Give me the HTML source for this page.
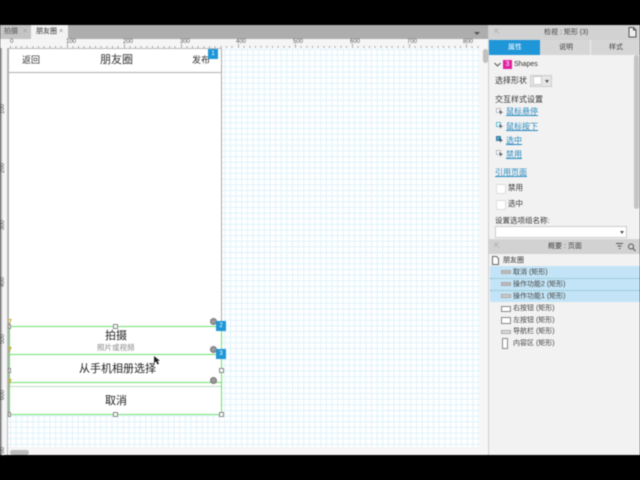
<!DOCTYPE html>
<html><head><meta charset="utf-8"><style>
html,body{margin:0;padding:0;width:640px;height:480px;overflow:hidden;background:#000}
body{font-family:"Liberation Sans","Noto Sans CJK SC",sans-serif;color:#333}
#w{position:absolute;left:0;top:0;width:640px;height:480px;overflow:hidden;filter:blur(.45px)}
#w div,#w a{position:absolute;white-space:nowrap}
.t{line-height:1}
.l{color:#2a8bc0;text-decoration:underline;font-size:8px;line-height:1}
.h{width:3px;height:3px;background:#fff;border:1px solid #888}
.c{width:5px;height:5px;border-radius:50%;background:#999;border:1px solid #777}
.b{width:10px;height:10px;background:#1e96d8;color:#fff;font-size:6px;line-height:10px;text-align:center}
.g{background:#6fe06f;height:1px;left:9px;width:212px}
.y{color:#c9a010;font-size:7px;font-weight:bold;line-height:1;left:8px}
.s{background:#c3e4f6}
.n{font-size:7px;line-height:1;color:#444;left:513px}
.ic{border:1px solid #888;background:#fff;box-sizing:border-box}
</style></head><body><div id="w">
<div style="left:0;top:25px;width:640px;height:430px;background:#f2f2f2"></div>
<!-- tabs -->
<div style="left:0;top:25px;width:489px;height:14px;background:#adadad"></div>
<div style="left:0;top:25px;width:31px;height:14px;background:#c4c4c4"></div>
<div class="t" style="left:4px;top:28px;font-size:7px;color:#555">拍摄</div>
<div class="t" style="left:23px;top:28px;font-size:7px;color:#999">×</div>
<div style="left:31px;top:25px;width:37px;height:14px;background:#f2f2f2"></div>
<div class="t" style="left:36px;top:28px;font-size:7px;color:#333">朋友圈</div>
<div class="t" style="left:59px;top:28px;font-size:7px;color:#888">×</div>
<div style="left:474px;top:32px;width:0;height:0;border:3px solid transparent;border-top:3px solid #555"></div>
<!-- ruler -->
<div style="left:0;top:39px;width:480px;height:9px;background:#f5f5f5"></div>
<svg style="position:absolute;left:0;top:39px" width="480" height="9"><g stroke="#aaa" stroke-width="1">
<path d="M10.500 7v2M16 7v2M21.500 7v2M27 7v2M33 7v2M38.500 7v2M44 7v2M50 7v2M55.500 7v2M61 7v2M67.500 5v4M73 7v2M78.500 7v2M84 7v2M90 7v2M95.500 7v2M101 7v2M107 7v2M112.500 7v2M118 7v2M124.500 5v4M130 7v2M135.500 7v2M141 7v2M147 7v2M152.500 7v2M158 7v2M164 7v2M169.500 7v2M175 7v2M181.500 5v4M187 7v2M192.500 7v2M198 7v2M204 7v2M209.500 7v2M215 7v2M221 7v2M226.500 7v2M232 7v2M238.500 5v4M244 7v2M250 7v2M255.500 7v2M261 7v2M267 7v2M272.500 7v2M278 7v2M284 7v2M289.500 7v2M295.500 5v4M301 7v2M307 7v2M312.500 7v2M318 7v2M324 7v2M329.500 7v2M335 7v2M341 7v2M346.500 7v2M352.500 5v4M358 7v2M364 7v2M369.500 7v2M375 7v2M381 7v2M386.500 7v2M392 7v2M398 7v2M403.500 7v2M409.500 5v4M415 7v2M421 7v2M426.500 7v2M432 7v2M438 7v2M443.500 7v2M449 7v2M455 7v2M460.500 7v2M466.500 5v4M472 7v2M478 7v2"/></g></svg>
<div class="t" style="left:10px;top:39px;font-size:6px;color:#555">0</div>
<div class="t" style="left:66px;top:39px;font-size:6px;color:#555">100</div>
<div class="t" style="left:123px;top:39px;font-size:6px;color:#555">200</div>
<div class="t" style="left:180px;top:39px;font-size:6px;color:#555">300</div>
<div class="t" style="left:236px;top:39px;font-size:6px;color:#555">400</div>
<div class="t" style="left:293px;top:39px;font-size:6px;color:#555">500</div>
<div class="t" style="left:350px;top:39px;font-size:6px;color:#555">600</div>
<div class="t" style="left:407px;top:39px;font-size:6px;color:#555">700</div>
<div class="t" style="left:463px;top:39px;font-size:6px;color:#555">800</div>
<!-- left ruler -->
<div style="left:0;top:48px;width:8px;height:407px;background:#f5f5f5;border-right:1px solid #bbb;box-sizing:border-box"></div>
<div style="left:0;top:48px;width:2px;height:407px;background:#a8a8a8"></div>
<div class="t" style="left:-2px;top:106px;font-size:6px;color:#555;transform:rotate(-90deg)">100</div>
<div class="t" style="left:-2px;top:165px;font-size:6px;color:#555;transform:rotate(-90deg)">200</div>
<div class="t" style="left:-2px;top:222px;font-size:6px;color:#555;transform:rotate(-90deg)">300</div>
<div class="t" style="left:-2px;top:279px;font-size:6px;color:#555;transform:rotate(-90deg)">400</div>
<div class="t" style="left:-2px;top:336px;font-size:6px;color:#555;transform:rotate(-90deg)">500</div>
<div class="t" style="left:-2px;top:392px;font-size:6px;color:#555;transform:rotate(-90deg)">600</div>
<div class="t" style="left:-2px;top:449px;font-size:6px;color:#555;transform:rotate(-90deg)">700</div>
<!-- canvas grid -->
<div style="left:8px;top:48px;width:472px;height:399px;background-color:#fff;background-image:linear-gradient(to right,#def2fb 1px,transparent 1px),linear-gradient(to bottom,#def2fb 1px,transparent 1px);background-size:5.65px 5.65px;background-position:2px 1px"></div>
<!-- h scroll -->
<div style="left:8px;top:447px;width:472px;height:8px;background:#f7f5f5"></div>
<div style="left:10px;top:450px;width:19px;height:5px;border-radius:3px;background:#bdbdbd"></div>
<!-- v scroll -->
<div style="left:480px;top:39px;width:9px;height:416px;background:#f6f6f6"></div>
<div style="left:483px;top:49px;width:5px;height:14px;border-radius:3px;background:#c0c0c0"></div>
<div style="left:488px;top:25px;width:1px;height:430px;background:#cfcfcf"></div>
<!-- artboard -->
<div style="left:9px;top:48px;width:213px;height:367px;background:#fff"></div>
<div style="left:8px;top:48px;width:1px;height:367px;background:#aaa"></div>
<div style="left:221px;top:48px;width:1px;height:367px;background:#aaa"></div>
<div style="left:9px;top:48px;width:213px;height:1px;background:#bbb"></div>
<div style="left:9px;top:72px;width:213px;height:1px;background:#b0b0b0"></div>
<div class="t" style="left:22px;top:56px;font-size:9px">返回</div>
<div class="t" style="left:100px;top:55px;font-size:11px">朋友圈</div>
<div class="t" style="left:192px;top:56px;font-size:9px">发布</div>
<div class="b" style="left:208px;top:49px">1</div>
<!-- selected blocks -->
<div class="g" style="top:326px"></div>
<div class="g" style="top:354px"></div>
<div class="g" style="top:382px"></div>
<div class="g" style="top:414px"></div>
<div style="left:9px;top:386px;width:212px;height:0;border-top:1px dotted #8ab98a"></div>
<div style="left:9px;top:326px;width:1px;height:89px;background:#6fe06f"></div>
<div style="left:221px;top:326px;width:1px;height:89px;background:#6fe06f"></div>
<div class="t" style="left:105px;top:331px;font-size:11px;color:#222">拍摄</div>
<div class="t" style="left:97px;top:344px;font-size:7.500px;color:#888">照片或视频</div>
<div class="t" style="left:79px;top:364px;font-size:11px;color:#222">从手机相册选择</div>
<div class="t" style="left:105px;top:396px;font-size:11px;color:#222">取消</div>
<div class="y" style="top:319px">7</div><div class="y" style="top:347px">7</div><div class="y" style="top:379px">7</div>
<div class="c" style="left:210px;top:318px"></div>
<div class="c" style="left:210px;top:346px"></div>
<div class="c" style="left:210px;top:377px"></div>
<div class="b" style="left:216px;top:321px">2</div>
<div class="b" style="left:216px;top:349px">3</div>
<div class="h" style="left:113px;top:324px"></div>
<div class="h" style="left:219px;top:368px"></div>
<div class="h" style="left:8px;top:324px;width:1px"></div>
<div class="h" style="left:8px;top:368px;width:1px"></div>
<div class="h" style="left:8px;top:412px;width:1px"></div>
<div class="h" style="left:113px;top:412px"></div>
<div class="h" style="left:219px;top:412px"></div>
<svg style="position:absolute;left:153px;top:356px" width="8" height="10"><path d="M1 0v7l2-1.500 1.500 3 1.500-.7-1.500-3H7z" fill="#222"/></svg>
<!-- right panel -->
<div style="left:489px;top:25px;width:151px;height:430px;background:#f2f2f2"></div>
<div style="left:489px;top:25px;width:151px;height:15px;background:#d2d2d2"></div>
<div class="t" style="left:494px;top:29px;font-size:7px;color:#aaa">⇱</div>
<div class="t" style="left:544px;top:29px;font-size:7px;color:#444">检视 : 矩形 (3)</div>
<svg style="position:absolute;left:628px;top:27px" width="9" height="11"><path d="M1 .500h4.500L8 3v7H1zM5.500 .500V3H8" fill="#eee" stroke="#555"/></svg>
<div style="left:489px;top:40px;width:51px;height:15px;background:#1e96d8"></div>
<div class="t" style="left:508px;top:44px;font-size:7px;color:#fff">属性</div>
<div style="left:540px;top:40px;width:50px;height:15px;background:#d6d6d6"></div>
<div class="t" style="left:559px;top:44px;font-size:7px;color:#444">说明</div>
<div style="left:590px;top:40px;width:1px;height:15px;background:#eee"></div>
<div style="left:591px;top:40px;width:49px;height:15px;background:#d6d6d6"></div>
<div class="t" style="left:609px;top:44px;font-size:7px;color:#444">样式</div>
<svg style="position:absolute;left:494px;top:62px" width="7" height="5"><path d="M.500 1l3 3 3-3" fill="none" stroke="#555"/></svg>
<div style="left:503px;top:60px;width:9px;height:9px;background:#e020a0;color:#fff;font-size:7px;line-height:9px;text-align:center">3</div>
<div class="t" style="left:514px;top:61px;font-size:7px;color:#333">Shapes</div>
<div class="t" style="left:495px;top:77px;font-size:8px">选择形状</div>
<div style="left:530px;top:75px;width:22px;height:12px;background:#e6e6e6;border:1px solid #ccc;box-sizing:border-box"></div>
<div style="left:533px;top:76px;width:9px;height:9px;background:#fff;border:1px solid #ccc;box-sizing:border-box"></div>
<div style="left:545px;top:80px;width:0;height:0;border:2.500px solid transparent;border-top:3px solid #555"></div>
<div class="t" style="left:495px;top:96px;font-size:8px">交互样式设置</div>
<svg style="position:absolute;left:496px;top:108px" width="8" height="8"><path d="M.500 .500h4v4h-4z" fill="#fff" stroke="#bbb"/><path d="M3 2l4 2.500-2 .5-.5 2z" fill="#456"/></svg><a class="l" style="left:506px;top:108px">鼠标悬停</a>
<svg style="position:absolute;left:496px;top:122px" width="8" height="8"><path d="M.500 .500h4v4h-4z" fill="#fff" stroke="#6bc"/><path d="M3 2l4 2.500-2 .5-.5 2z" fill="#456"/></svg><a class="l" style="left:506px;top:123px">鼠标按下</a>
<svg style="position:absolute;left:496px;top:136px" width="8" height="8"><path d="M.500 .500h4v4h-4z" fill="#5ab" stroke="#37a"/><path d="M3 2l4 2.500-2 .5-.5 2z" fill="#345"/></svg><a class="l" style="left:506px;top:137px">选中</a>
<svg style="position:absolute;left:496px;top:150px" width="8" height="8"><path d="M.500 .500h4v4h-4z" fill="#fff" stroke="#bbb"/><path d="M3 2l4 2.500-2 .5-.5 2z" fill="#456"/></svg><a class="l" style="left:506px;top:151px">禁用</a>
<a class="l" style="left:495px;top:169px">引用页面</a>
<div style="left:496px;top:184px;width:8px;height:8px;background:#fff;border:1px solid #ddd;border-radius:1px"></div>
<div class="t" style="left:508px;top:184px;font-size:7.500px">禁用</div>
<div style="left:496px;top:200px;width:8px;height:8px;background:#fff;border:1px solid #ddd;border-radius:1px"></div>
<div class="t" style="left:508px;top:200px;font-size:7.500px">选中</div>
<div class="t" style="left:495px;top:217px;font-size:7.500px">设置选项组名称:</div>
<div style="left:495px;top:226px;width:132px;height:12px;background:#fff;border:1px solid #ccc;box-sizing:border-box"></div>
<div style="left:620px;top:231px;width:0;height:0;border:2.500px solid transparent;border-top:3px solid #555"></div>
<div style="left:634px;top:55px;width:5px;height:154px;background:#c4c4c4;border-radius:3px"></div>
<!-- outline panel -->
<div style="left:489px;top:239px;width:151px;height:15px;background:#d2d2d2"></div>
<div class="t" style="left:494px;top:243px;font-size:7px;color:#aaa">⇱</div>
<div class="t" style="left:548px;top:243px;font-size:7px;color:#444">概要 : 页面</div>
<svg style="position:absolute;left:616px;top:243px" width="20" height="9"><path d="M0 .500h7M1.500 3h4M3 5.500h1.500" stroke="#555" fill="none"/><circle cx="15" cy="3.500" r="2.500" fill="none" stroke="#555"/><path d="M17 5.500l2.500 2.500" stroke="#555"/></svg>
<svg style="position:absolute;left:492px;top:256px" width="7" height="9"><path d="M.500 .500h4l2 2v6h-6z" fill="#fff" stroke="#666"/></svg>
<div class="t" style="left:503px;top:257px;font-size:7px;color:#333">朋友圈</div>
<div style="left:490px;top:266px;width:150px;height:36px;background:#c3e4f6"></div>
<div style="left:490px;top:278px;width:150px;height:0;border-top:1px dotted #7bb"></div>
<div style="left:490px;top:290px;width:150px;height:0;border-top:1px dotted #7bb"></div>
<div class="ic" style="left:501px;top:270px;width:10px;height:4px;background:#bbb;border-color:#aaa"></div><div class="n" style="top:269px">取消 (矩形)</div>
<div class="ic" style="left:501px;top:282px;width:10px;height:4px;background:#bbb;border-color:#aaa"></div><div class="n" style="top:281px">操作功能2 (矩形)</div>
<div class="ic" style="left:501px;top:294px;width:10px;height:4px;background:#ccc;border-color:#aaa"></div><div class="n" style="top:293px">操作功能1 (矩形)</div>
<div class="ic" style="left:501px;top:306px;width:10px;height:6px"></div><div class="n" style="top:305px">右按钮 (矩形)</div>
<div class="ic" style="left:501px;top:317px;width:10px;height:7px"></div><div class="n" style="top:317px">左按钮 (矩形)</div>
<div class="ic" style="left:501px;top:330px;width:10px;height:4px;background:#ddd;border-color:#aaa"></div><div class="n" style="top:328px">导航栏 (矩形)</div>
<div class="ic" style="left:502px;top:338px;width:6px;height:11px"></div><div class="n" style="top:340px">内容区 (矩形)</div>
</div></body></html>
